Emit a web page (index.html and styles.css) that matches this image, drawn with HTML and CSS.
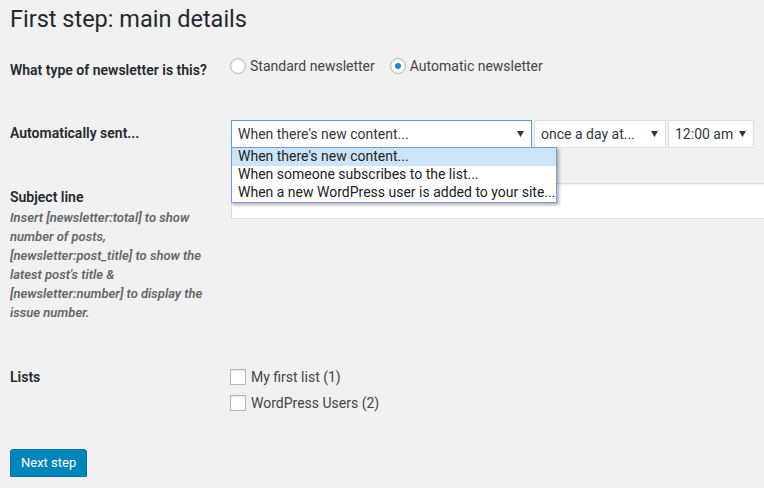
FILE: index.html
```html
<!DOCTYPE html>
<html lang="en">
<head>
<meta charset="utf-8">
<title>First step: main details</title>
<link rel="stylesheet" href="styles.css">
</head>
<body>
<div class="wrap">
  <h1 class="title">First step: main details</h1>
  <div class="form">
    <div class="row row-type">
      <div class="th">What type of newsletter is this?</div>
      <div class="td choices">
        <label class="choice"><span class="radio"></span>Standard newsletter</label>
        <label class="choice"><span class="radio checked"></span>Automatic newsletter</label>
      </div>
    </div>

    <div class="row row-auto">
      <div class="th">Automatically sent...</div>
      <div class="td selects">
        <div class="select select-event focused">
          <span>When there's new content...</span>
          <svg class="arrow" width="7" height="6" viewBox="0 0 7 6"><polygon points="0,0 7,0 3.5,6" fill="#32373c"/></svg>
          <ul class="dropdown">
            <li class="active">When there's new content...</li>
            <li>When someone subscribes to the list...</li>
            <li>When a new WordPress user is added to your site...</li>
          </ul>
        </div>
        <div class="select select-freq">
          <span>once a day at...</span>
          <svg class="arrow" width="7" height="6" viewBox="0 0 7 6"><polygon points="0,0 7,0 3.5,6" fill="#32373c"/></svg>
        </div>
        <div class="select select-time">
          <span>12:00 am</span>
          <svg class="arrow" width="7" height="6" viewBox="0 0 7 6"><polygon points="0,0 7,0 3.5,6" fill="#32373c"/></svg>
        </div>
      </div>
    </div>

    <div class="row row-subject">
      <div class="th">
        <div class="label">Subject line</div>
        <p class="description">Insert [newsletter:total] to show number of posts, [newsletter:post_title] to show the latest post's title &amp; [newsletter:number] to display the issue number.</p>
      </div>
      <div class="td input-cell">
        <div class="text-input"></div>
      </div>
    </div>

    <div class="row row-lists">
      <div class="th">Lists</div>
      <div class="td checks">
        <label class="choice"><span class="checkbox"></span>My first list (1)</label>
        <label class="choice"><span class="checkbox"></span>WordPress Users (2)</label>
      </div>
    </div>
  </div>
  <div class="submit">
    <button class="button-primary" type="button">Next step</button>
  </div>
</div>
</body>
</html>
```
FILE: styles.css
```css
html, body {
  margin: 0;
  padding: 0;
  overflow: hidden;
}

body {
  background: #f1f1f1;
  color: #444;
  font-family: Roboto, "Liberation Sans", sans-serif;
  font-size: 14px;
}

.wrap {
  padding-left: 10px;
}

.title {
  margin: 0;
  padding-top: 5px;
  font-size: 23.5px;
  line-height: 29px;
  font-weight: 400;
  color: #23282d;
}

.row {
  display: grid;
  grid-template-columns: 220px 1fr;
  align-items: start;
}

.th {
  box-sizing: border-box;
  padding-right: 20px;
  font-weight: 600;
  font-size: 14px;
  line-height: 18.2px;
  color: #23282d;
}

.td {
  min-width: 0;
}

/* row 1 */
.row-type .th { padding-top: 27px; }
.row-type .td { padding-top: 24px; padding-bottom: 26px; }

.choices {
  display: flex;
  gap: 15px;
}

.choice {
  display: flex;
  align-items: center;
  gap: 4px;
  height: 16px;
  line-height: 16px;
  font-size: 14px;
  color: #444;
}

.radio {
  box-sizing: border-box;
  width: 16px;
  height: 16px;
  border: 1px solid #b4b9be;
  border-radius: 50%;
  background: #fff;
  box-shadow: inset 0 1px 2px rgba(0, 0, 0, 0.1);
  display: flex;
  align-items: center;
  justify-content: center;
}

.radio.checked::after {
  content: "";
  width: 6px;
  height: 6px;
  border-radius: 50%;
  background: #1e8cbe;
}

/* row 2 */
.row-auto .th { padding-top: 24px; }
.row-auto .td { padding-top: 19px; padding-bottom: 14px; }

.selects {
  display: flex;
}

.select {
  position: relative;
  box-sizing: border-box;
  margin: 1px;
  height: 28px;
  border: 1px solid #ddd;
  background: #fff;
  padding: 0 7px 0 6px;
  display: flex;
  align-items: center;
  justify-content: space-between;
  font-size: 14px;
  color: #32373c;
  box-shadow: inset 0 1px 2px rgba(0, 0, 0, 0.04);
}

.select.focused {
  border-color: #5b9dd9;
}

.select-event { width: 301px; }
.select-freq { width: 132px; }
.select-time { width: 86px; padding-right: 7px; }

.arrow {
  flex: none;
}

.dropdown {
  position: absolute;
  top: 100%;
  left: -1px;
  z-index: 5;
  box-sizing: border-box;
  width: 326px;
  margin: 0;
  padding: 0;
  list-style: none;
  background: #fff;
  border: 1px solid #7b9bd0;
  box-shadow: 2px 2px 3px rgba(0, 0, 0, 0.3);
}

.dropdown li {
  height: 18px;
  box-sizing: border-box;
  padding: 1px 0 2px 6px;
  line-height: 15px;
  font-size: 14px;
  color: #222;
  white-space: nowrap;
}

.dropdown li.active {
  background: #cce4f8;
}

/* row 3 */
.row-subject .th { padding-top: 25px; }
.row-subject .td { padding-top: 19px; }

.label {
  line-height: 19px;
}

.description {
  margin: 1px 0 0;
  font-size: 13px;
  line-height: 19px;
  font-style: italic;
  font-weight: 600;
  color: #666;
}

.input-cell {
  overflow: hidden;
}

.text-input {
  box-sizing: border-box;
  margin: 1px;
  width: calc(100% + 20px);
  height: 36px;
  border: 1px solid #ddd;
  background: #fff;
  box-shadow: inset 0 1px 2px rgba(0, 0, 0, 0.07);
}

/* row 4 */
.row-lists .th { padding-top: 46px; }
.row-lists .td { padding-top: 47px; }

.checks {
  display: flex;
  flex-direction: column;
  gap: 10px;
}

.checkbox {
  box-sizing: border-box;
  width: 16px;
  height: 16px;
  border: 1px solid #b4b9be;
  background: #fff;
  box-shadow: inset 0 1px 2px rgba(0, 0, 0, 0.1);
}

.checks .choice { gap: 5px; }

/* submit */
.submit {
  margin-top: 38px;
}

.button-primary {
  box-sizing: border-box;
  height: 28px;
  margin: 0;
  padding: 0 10px;
  border: 1px solid #0073aa;
  border-radius: 3px;
  background: #0085ba;
  box-shadow: 0 1px 0 #006799;
  color: #fff;
  font-family: Roboto, "Liberation Sans", sans-serif;
  font-size: 13px;
  line-height: 26px;
}
```
